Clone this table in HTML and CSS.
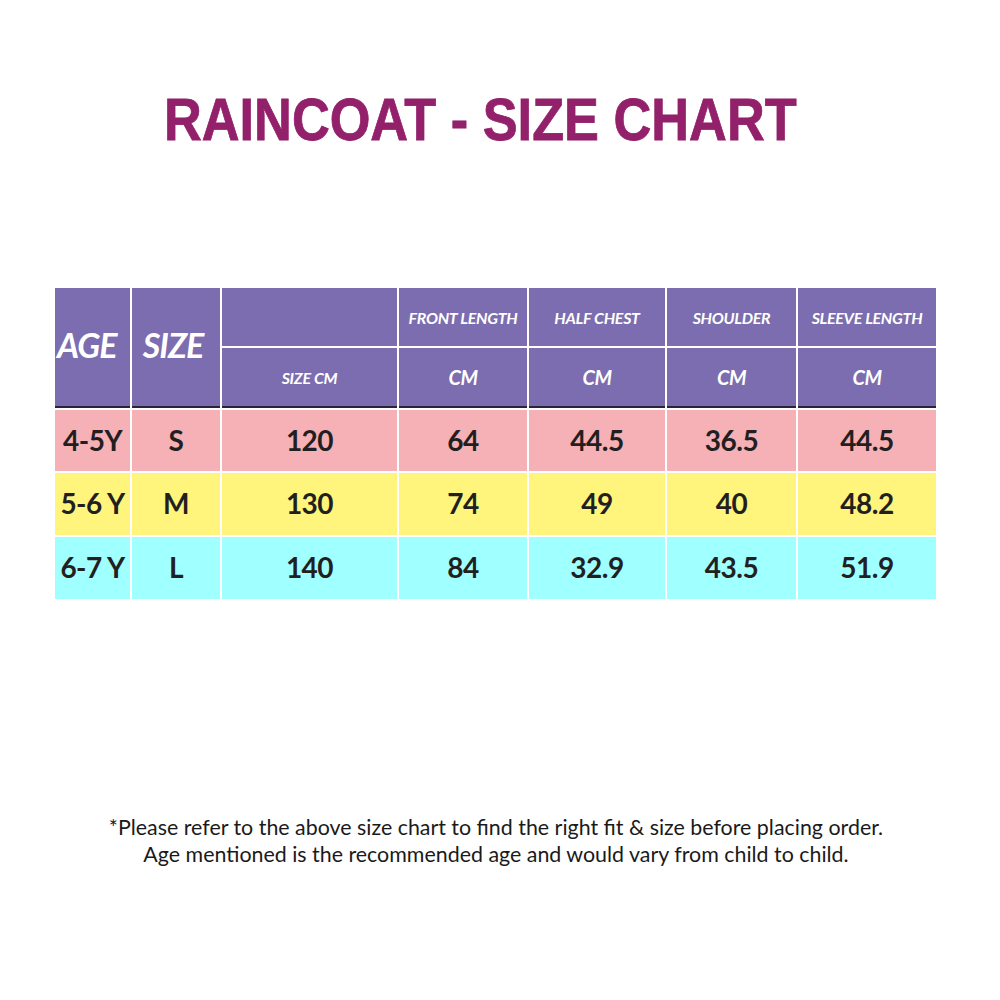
FILE: index.html
```html
<!DOCTYPE html>
<html>
<head>
<meta charset="utf-8">
<link rel="stylesheet" href="styles.css">
</head>
<body>
<div class="page">
  <h1 class="title"><span class="title-text">RAINCOAT - SIZE CHART</span></h1>
  <div class="chart">
    <div class="hd big span2">AGE</div>
    <div class="hd big span2">SIZE</div>
    <div class="hd"></div>
    <div class="hd small">FRONT LENGTH</div>
    <div class="hd small">HALF CHEST</div>
    <div class="hd small">SHOULDER</div>
    <div class="hd small">SLEEVE LENGTH</div>
    <div class="hd sub small">SIZE CM</div>
    <div class="hd sub cm">CM</div>
    <div class="hd sub cm">CM</div>
    <div class="hd sub cm">CM</div>
    <div class="hd sub cm">CM</div>

    <div class="cell pink">4-5Y</div>
    <div class="cell pink">S</div>
    <div class="cell pink">120</div>
    <div class="cell pink">64</div>
    <div class="cell pink">44.5</div>
    <div class="cell pink">36.5</div>
    <div class="cell pink">44.5</div>

    <div class="cell yellow">5-6 Y</div>
    <div class="cell yellow">M</div>
    <div class="cell yellow">130</div>
    <div class="cell yellow">74</div>
    <div class="cell yellow">49</div>
    <div class="cell yellow">40</div>
    <div class="cell yellow">48.2</div>

    <div class="cell cyan">6-7 Y</div>
    <div class="cell cyan">L</div>
    <div class="cell cyan">140</div>
    <div class="cell cyan">84</div>
    <div class="cell cyan">32.9</div>
    <div class="cell cyan">43.5</div>
    <div class="cell cyan">51.9</div>
  </div>
  <div class="note">
    <p>*Please refer to the above size chart to find the right fit &amp; size before placing order.</p>
    <p>Age mentioned is the recommended age and would vary from child to child.</p>
  </div>
</div>
</body>
</html>
```
FILE: styles.css
```css
html, body {
  margin: 0;
  padding: 0;
  background: #ffffff;
}

.page {
  width: 1000px;
  height: 1000px;
  font-family: "Lato", "Liberation Sans", sans-serif;
  padding-top: 90px;
  box-sizing: border-box;
}

.title {
  margin: 0;
  padding-left: 164px;
  height: 60px;
  font-family: "Liberation Sans", Arial, sans-serif;
  font-weight: bold;
  font-size: 60px;
  line-height: 60px;
  color: #93206a;
  white-space: nowrap;
  -webkit-text-stroke: 0.8px #93206a;
}

.title-text {
  display: inline-block;
  transform: scaleX(0.872);
  transform-origin: left center;
}

.chart {
  margin: 138px 0 0 55px;
  width: 881px;
  display: grid;
  grid-template-columns: 75px 88px 175px 128px 136px 129px 138px;
  grid-template-rows: 58px 60px 61px 62px 62px;
  gap: 2px;
}

.hd {
  background: #7b6daf;
  color: #ffffff;
  font-style: italic;
  font-weight: bold;
  display: flex;
  align-items: center;
  justify-content: center;
}

.hd.span2 {
  grid-row: span 2;
  border-bottom: 2px solid #2b2338;
}

.hd.sub {
  border-bottom: 2px solid #2b2338;
}

.hd.big {
  font-size: 34px;
  letter-spacing: -1px;
  padding-bottom: 6px;
  box-sizing: border-box;
}

.hd.big:first-child {
  justify-content: flex-start;
  padding-left: 2px;
}

.hd.big:nth-child(2) {
  padding-right: 6px;
}

.hd.small {
  font-size: 16px;
  letter-spacing: -0.3px;
}

.hd.cm {
  font-size: 20px;
  letter-spacing: -0.5px;
}

.cell {
  display: flex;
  align-items: center;
  justify-content: center;
  font-weight: bold;
  font-size: 28px;
  letter-spacing: -0.5px;
  color: #231f20;
  padding-bottom: 2px;
  box-sizing: border-box;
}

.pink { background: #f5b1b6; }
.yellow { background: #fff57c; }
.cyan { background: #a0ffff; }

.note {
  margin-top: 215px;
  text-align: center;
  color: #1a1a1a;
  font-size: 21.4px;
  line-height: 27px;
  padding-right: 8px;
}

.note p {
  margin: 0;
}
```
